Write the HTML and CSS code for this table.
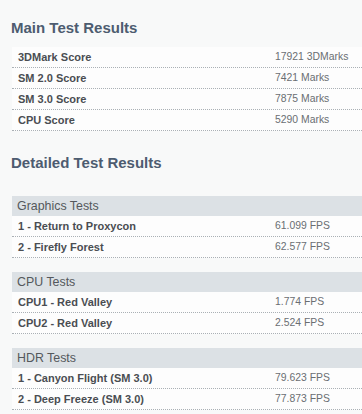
FILE: index.html
```html
<!DOCTYPE html>
<html>
<head>
<meta charset="utf-8">
<link rel="stylesheet" href="styles.css">
</head>
<body>
<section class="block">
  <h2 class="title title-main">Main Test Results</h2>
  <div class="results">
    <div class="row"><span class="label">3DMark Score</span><span class="value">17921 3DMarks</span></div>
    <div class="row"><span class="label">SM 2.0 Score</span><span class="value">7421 Marks</span></div>
    <div class="row"><span class="label">SM 3.0 Score</span><span class="value">7875 Marks</span></div>
    <div class="row"><span class="label">CPU Score</span><span class="value">5290 Marks</span></div>
  </div>
</section>
<section class="block">
  <h2 class="title title-detail">Detailed Test Results</h2>
  <div class="group">
    <div class="group-head">Graphics Tests</div>
    <div class="row"><span class="label">1 - Return to Proxycon</span><span class="value">61.099 FPS</span></div>
    <div class="row"><span class="label">2 - Firefly Forest</span><span class="value">62.577 FPS</span></div>
  </div>
  <div class="group">
    <div class="group-head">CPU Tests</div>
    <div class="row"><span class="label">CPU1 - Red Valley</span><span class="value">1.774 FPS</span></div>
    <div class="row"><span class="label">CPU2 - Red Valley</span><span class="value">2.524 FPS</span></div>
  </div>
  <div class="group">
    <div class="group-head">HDR Tests</div>
    <div class="row"><span class="label">1 - Canyon Flight (SM 3.0)</span><span class="value">79.623 FPS</span></div>
    <div class="row"><span class="label">2 - Deep Freeze (SM 3.0)</span><span class="value">77.873 FPS</span></div>
  </div>
</section>
</body>
</html>
```
FILE: styles.css
```css
html, body {
  margin: 0;
  padding: 0;
  background: #f8f9f9;
  font-family: "Liberation Sans", Arial, sans-serif;
}
body {
  width: 362px;
  height: 414px;
  overflow: hidden;
}
.title {
  margin: 0;
  padding-left: 11px;
  font-size: 15px;
  line-height: 18px;
  font-weight: bold;
  color: #4d5c70;
}
.title-main {
  padding-top: 19px;
  margin-bottom: 10px;
}
.title-detail {
  margin-top: 23px;
  margin-bottom: 24px;
}
.results, .group {
  margin-left: 12px;
}
.group + .group {
  margin-top: 14px;
}
.row {
  display: grid;
  grid-template-columns: 263px 1fr;
  height: 20px;
  line-height: 20px;
  font-size: 11px;
  background: #fdfdfd;
  border-bottom: 1px dotted #aab0b5;
}
.label {
  padding-left: 6px;
  font-weight: bold;
  color: #4a4d52;
}
.value {
  font-size: 10.4px;
  color: #6a6e72;
}
.group-head {
  height: 20px;
  line-height: 20px;
  padding-left: 5px;
  font-size: 12.4px;
  color: #54585c;
  background: #dce1e5;
}
```
